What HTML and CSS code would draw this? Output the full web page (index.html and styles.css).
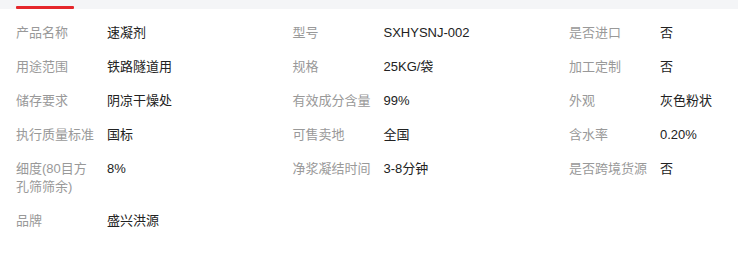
FILE: index.html
```html
<!DOCTYPE html>
<html lang="zh-CN">
<head>
<meta charset="utf-8">
<title>产品参数</title>
<link rel="stylesheet" href="styles.css">
</head>
<body>
<div class="page">
  <div class="tabbar"><span class="tab-indicator"></span></div>
  <div class="attrs">
    <div class="attr"><span class="label">产品名称</span><span class="value">速凝剂</span></div>
    <div class="attr"><span class="label">型号</span><span class="value">SXHYSNJ-002</span></div>
    <div class="attr"><span class="label">是否进口</span><span class="value">否</span></div>

    <div class="attr"><span class="label">用途范围</span><span class="value">铁路隧道用</span></div>
    <div class="attr"><span class="label">规格</span><span class="value">25KG/袋</span></div>
    <div class="attr"><span class="label">加工定制</span><span class="value">否</span></div>

    <div class="attr"><span class="label">储存要求</span><span class="value">阴凉干燥处</span></div>
    <div class="attr"><span class="label">有效成分含量</span><span class="value">99%</span></div>
    <div class="attr"><span class="label">外观</span><span class="value">灰色粉状</span></div>

    <div class="attr"><span class="label">执行质量标准</span><span class="value">国标</span></div>
    <div class="attr"><span class="label">可售卖地</span><span class="value">全国</span></div>
    <div class="attr"><span class="label">含水率</span><span class="value">0.20%</span></div>

    <div class="attr"><span class="label">细度(80目方孔筛筛余)</span><span class="value">8%</span></div>
    <div class="attr"><span class="label">净浆凝结时间</span><span class="value">3-8分钟</span></div>
    <div class="attr"><span class="label">是否跨境货源</span><span class="value">否</span></div>

    <div class="attr"><span class="label">品牌</span><span class="value">盛兴洪源</span></div>
  </div>
</div>
</body>
</html>
```

FILE: styles.css
```css
html, body {
  margin: 0;
  padding: 0;
  background: #ffffff;
  overflow: hidden;
}

.page {
  width: 738px;
  overflow: hidden;
  font-family: "Liberation Sans", "Noto Sans CJK SC", sans-serif;
  font-size: 13px;
}

.tabbar {
  height: 9px;
  background: #f4f5f7;
  display: flex;
  align-items: flex-end;
  padding-left: 16px;
}

.tab-indicator {
  display: block;
  width: 58px;
  height: 3px;
  background: #e5262b;
  border-radius: 1px;
}

.attrs {
  display: grid;
  grid-template-columns: repeat(3, 276.5px);
  padding: 7px 0 0 16px;
  width: 845.5px;
}

.attr {
  display: flex;
  align-items: flex-start;
  padding: 8px 0;
  line-height: 18px;
}

.label {
  flex: 0 0 78px;
  width: 78px;
  margin-right: 13px;
  color: #999999;
}

.value {
  color: #222222;
}
```
